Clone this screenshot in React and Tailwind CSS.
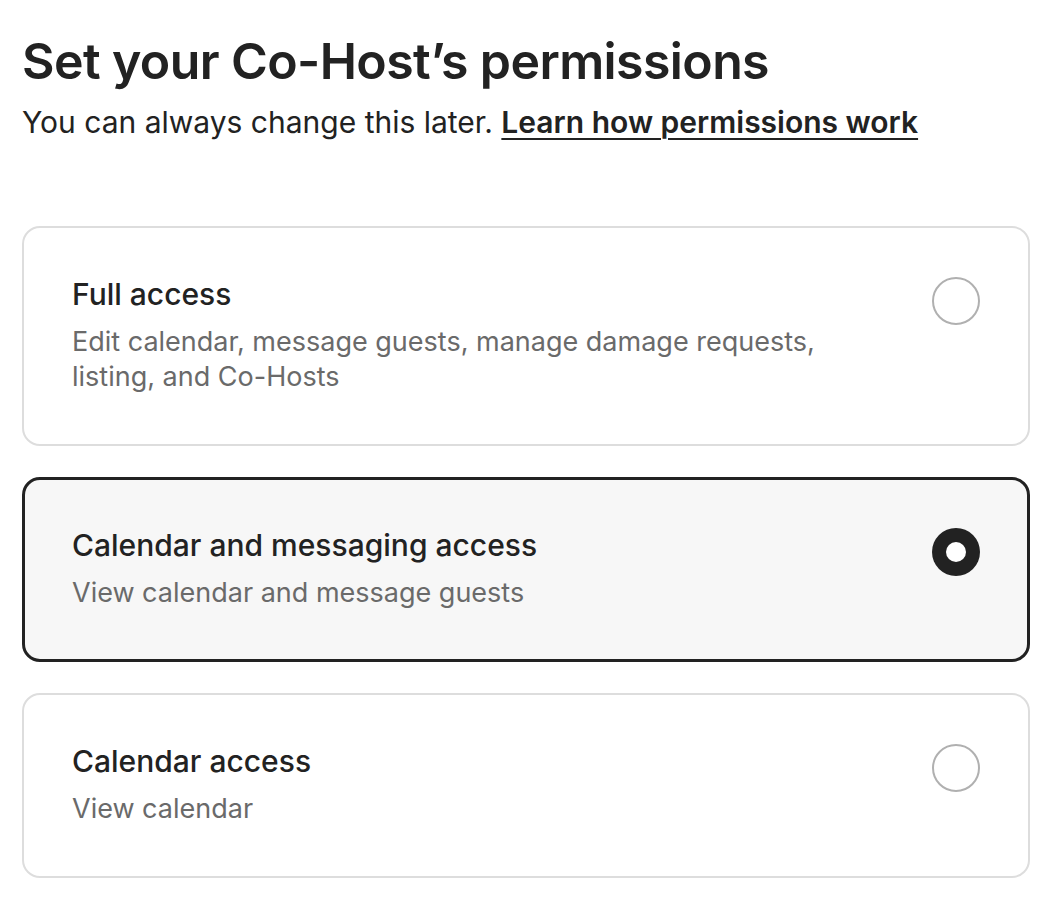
import React from "react";

const options = [
  {
    title: "Full access",
    desc: "Edit calendar, message guests, manage damage requests, listing, and Co-Hosts",
    selected: false,
  },
  {
    title: "Calendar and messaging access",
    desc: "View calendar and message guests",
    selected: true,
  },
  {
    title: "Calendar access",
    desc: "View calendar",
    selected: false,
  },
];

function Radio({ selected }) {
  if (selected) {
    return (
      <div className="w-[48px] h-[48px] shrink-0 rounded-full bg-[#222222] flex items-center justify-center">
        <div className="w-[20px] h-[20px] rounded-full bg-white" />
      </div>
    );
  }
  return <div className="w-[48px] h-[48px] shrink-0 rounded-full border-2 border-[#b0b0b0] bg-white" />;
}

export default function App() {
  return (
    <div
      className="w-[1060px] h-[900px] bg-white text-[#222222] px-[22px] pt-[29px]"
      style={{ fontFamily: "Inter, 'Noto Sans', sans-serif" }}
    >
      <h1 className="text-[50px] leading-[64px] font-semibold tracking-[-0.6px]">
        Set your Co-Host’s permissions
      </h1>
      <p className="text-[30px] leading-[40px] mt-[9px]">
        You can always change this later.{" "}
        <a className="font-semibold underline underline-offset-[5px] decoration-2">Learn how permissions work</a>
      </p>
      <div className="mt-[84px] flex flex-col gap-[31px] w-[1008px]">
        {options.map((o) => (
          <div
            key={o.title}
            className={
              o.selected
                ? "flex items-start justify-between rounded-[18px] border-[3px] border-[#222222] bg-[#f7f7f7] px-[47px] pt-[47px] pb-[49px]"
                : "flex items-start justify-between rounded-[18px] border-2 border-[#dddddd] bg-white px-[48px] pt-[48px] pb-[50px]"
            }
          >
            <div className="w-[800px]">
              <div className="text-[30px] leading-[36px] font-medium">{o.title}</div>
              <div className="text-[27px] leading-[35px] text-[#6a6a6a] mt-[12px]">{o.desc}</div>
            </div>
            <div className="mt-[1px]">
              <Radio selected={o.selected} />
            </div>
          </div>
        ))}
      </div>
    </div>
  );
}
